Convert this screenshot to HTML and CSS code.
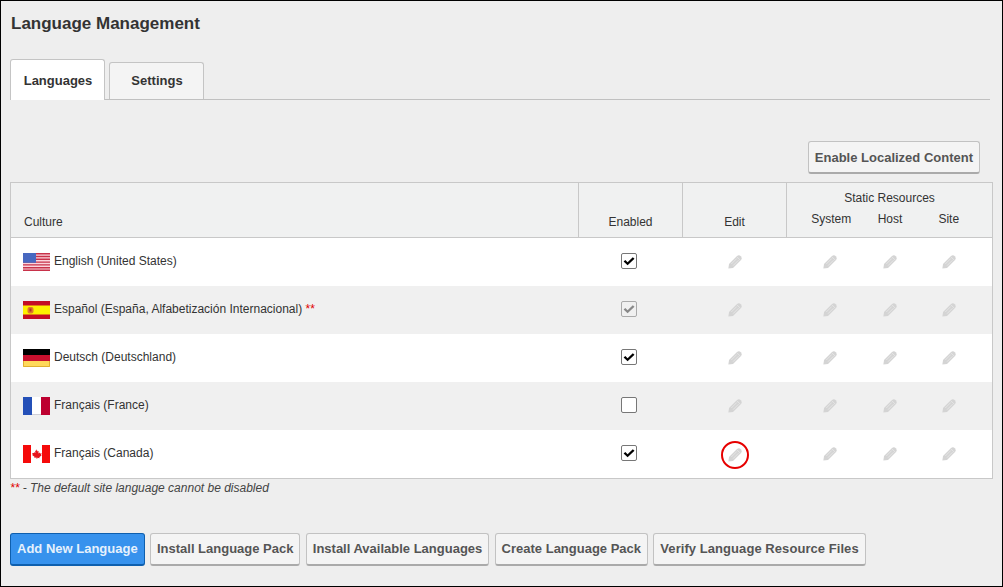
FILE: index.html
```html
<!DOCTYPE html>
<html lang="en">
<head>
    <meta charset="UTF-8">
    <title>Language Management</title>
    <link rel="stylesheet" href="styles.css">
</head>
<body>
    <svg class="defs" width="0" height="0">
        <symbol id="pencil" viewBox="0 0 14 14">
            <path d="M1 9 9 1Q11 -.4 12.8 1.2 14.4 3 13 5L5 13 .4 13.6Z"/>
            <path class="groove" d="M3.3 9 8.8 3.5M5 10.7 10.5 5.2M8.8 1.7 12.3 5.2"/>
        </symbol>
        <symbol id="tick" viewBox="0 0 14 14">
            <path d="M1.6 7.4 3.3 5.9 5.6 8.2 10.8 3.2 12.5 4.8 5.6 11.2Z"/>
        </symbol>
    </svg>

    <div class="page">
        <h1>Language Management</h1>

        <div class="tabs">
            <a class="tab active">Languages</a>
            <a class="tab">Settings</a>
        </div>

        <div class="top-actions">
            <button class="btn">Enable Localized Content</button>
        </div>

        <table class="languages">
            <colgroup>
                <col class="col-culture">
                <col class="col-enabled">
                <col class="col-edit">
                <col class="col-system">
                <col class="col-host">
                <col class="col-site">
            </colgroup>
            <thead>
                <tr>
                    <th class="culture" rowspan="2">Culture</th>
                    <th rowspan="2">Enabled</th>
                    <th rowspan="2">Edit</th>
                    <th class="static-title" colspan="3">Static Resources</th>
                </tr>
                <tr>
                    <th class="static-sub system">System</th>
                    <th class="static-sub">Host</th>
                    <th class="static-sub site">Site</th>
                </tr>
            </thead>
            <tbody>
                <tr>
                    <td class="culture">
                        <div class="lang">
                            <svg class="flag" viewBox="0 0 27 18">
                                <rect width="27" height="18" fill="#fbd5dc"/>
                                <path fill="#c8324a" d="M0 0h27v1.4H0zM0 2.8h27v1.4H0zM0 5.6h27V7H0zM0 8.4h27v1.4H0zM0 11.2h27v1.4H0zM0 14h27v1.4H0zM0 16.6h27V18H0z"/>
                                <rect width="13" height="9.8" fill="#4868c0"/>
                            </svg>
                            <span>English (United States)</span>
                        </div>
                    </td>
                    <td><span class="check on"><svg><use href="#tick"/></svg></span></td>
                    <td><svg class="pencil"><use href="#pencil"/></svg></td>
                    <td class="system"><svg class="pencil"><use href="#pencil"/></svg></td>
                    <td class="host"><svg class="pencil"><use href="#pencil"/></svg></td>
                    <td class="site"><svg class="pencil"><use href="#pencil"/></svg></td>
                </tr>
                <tr>
                    <td class="culture">
                        <div class="lang">
                            <svg class="flag" viewBox="0 0 27 18">
                                <rect width="27" height="18" fill="#c40d24"/>
                                <rect y="4.5" width="27" height="9" fill="#fdf100"/>
                                <rect x="4.5" y="6" width="6" height="6.5" rx="2" fill="#e07a2a"/>
                                <rect x="6.5" y="7.5" width="2" height="3" fill="#b0302a"/>
                            </svg>
                            <span>Español (España, Alfabetización Internacional) <b class="req">**</b></span>
                        </div>
                    </td>
                    <td><span class="check on disabled"><svg><use href="#tick"/></svg></span></td>
                    <td><svg class="pencil"><use href="#pencil"/></svg></td>
                    <td class="system"><svg class="pencil"><use href="#pencil"/></svg></td>
                    <td class="host"><svg class="pencil"><use href="#pencil"/></svg></td>
                    <td class="site"><svg class="pencil"><use href="#pencil"/></svg></td>
                </tr>
                <tr>
                    <td class="culture">
                        <div class="lang">
                            <svg class="flag" viewBox="0 0 27 18">
                                <rect width="27" height="6" fill="#000"/>
                                <rect y="6" width="27" height="6" fill="#c8102e"/>
                                <rect y="12" width="27" height="6" fill="#ffd95a"/>
                                <path fill="none" stroke="#e0b030" d="M.5 12v5.5h26V12"/>
                            </svg>
                            <span>Deutsch (Deutschland)</span>
                        </div>
                    </td>
                    <td><span class="check on"><svg><use href="#tick"/></svg></span></td>
                    <td><svg class="pencil"><use href="#pencil"/></svg></td>
                    <td class="system"><svg class="pencil"><use href="#pencil"/></svg></td>
                    <td class="host"><svg class="pencil"><use href="#pencil"/></svg></td>
                    <td class="site"><svg class="pencil"><use href="#pencil"/></svg></td>
                </tr>
                <tr>
                    <td class="culture">
                        <div class="lang">
                            <svg class="flag" viewBox="0 0 27 18">
                                <rect width="27" height="18" fill="#fff"/>
                                <rect x="9" y="17" width="9" height="1" fill="#d0d0d8"/>
                                <rect width="9" height="18" fill="#2450b8"/>
                                <rect x="18" width="9" height="18" fill="#bd0030"/>
                            </svg>
                            <span>Français (France)</span>
                        </div>
                    </td>
                    <td><span class="check"></span></td>
                    <td><svg class="pencil"><use href="#pencil"/></svg></td>
                    <td class="system"><svg class="pencil"><use href="#pencil"/></svg></td>
                    <td class="host"><svg class="pencil"><use href="#pencil"/></svg></td>
                    <td class="site"><svg class="pencil"><use href="#pencil"/></svg></td>
                </tr>
                <tr>
                    <td class="culture">
                        <div class="lang">
                            <svg class="flag" viewBox="0 0 27 18">
                                <rect width="27" height="18" fill="#fff"/>
                                <rect width="8" height="18" fill="#f50a0a"/>
                                <rect x="19" width="8" height="18" fill="#f50a0a"/>
                                <path fill="#e8141c" transform="translate(2.7 1.8) scale(.8)" d="M13.5 3.2 15 5.8l1.3-.6-.5 3.2 1.6-1.2.5 1.2 2-.3-.7 2 .8.5-3 2.4.4 1.2-2.9-.4V15h-1v-1.7l-2.9.4.4-1.2-3-2.4.8-.5-.7-2 2 .3.5-1.2 1.6 1.2-.5-3.2 1.3.6Z"/>
                            </svg>
                            <span>Français (Canada)</span>
                        </div>
                    </td>
                    <td><span class="check on"><svg><use href="#tick"/></svg></span></td>
                    <td><span class="ring"><svg class="pencil"><use href="#pencil"/></svg></span></td>
                    <td class="system"><svg class="pencil"><use href="#pencil"/></svg></td>
                    <td class="host"><svg class="pencil"><use href="#pencil"/></svg></td>
                    <td class="site"><svg class="pencil"><use href="#pencil"/></svg></td>
                </tr>
            </tbody>
        </table>

        <p class="note"><b class="req">**</b> - The default site language cannot be disabled</p>

        <div class="bottom-actions">
            <button class="btn primary">Add New Language</button>
            <button class="btn">Install Language Pack</button>
            <button class="btn">Install Available Languages</button>
            <button class="btn">Create Language Pack</button>
            <button class="btn wide">Verify Language Resource Files</button>
        </div>
    </div>
</body>
</html>
```
FILE: styles.css
```css
* {
    box-sizing: border-box;
}

html, body {
    margin: 0;
    padding: 0;
}

body {
    font-family: "Liberation Sans", Arial, sans-serif;
    font-size: 12px;
    color: #333;
    background-color: #eee;
}

.defs {
    display: block;
    height: 0;
}

.page {
    width: 1003px;
    height: 587px;
    padding: 13px 10px 0 9px;
    border: 1px solid #000;
    overflow: hidden;
}

h1 {
    margin: 0 0 0 1px;
    font-size: 17px;
    line-height: 20px;
    font-weight: bold;
    color: #333;
}

/* tabs */
.tabs {
    display: flex;
    align-items: flex-end;
    gap: 4px;
    margin-top: 26px;
    height: 40px;
    width: 980px;
    border-bottom: 1px solid #c0c0c0;
}

.tab {
    width: 95px;
    height: 37px;
    padding-left: 1px;
    border: 1px solid #c4c4c4;
    border-bottom: none;
    border-radius: 3px 3px 0 0;
    background-color: #f4f4f4;
    font-size: 13px;
    font-weight: bold;
    line-height: 36px;
    text-align: center;
}

.tab.active {
    height: 41px;
    margin-bottom: -1px;
    line-height: 42px;
    background-color: #fff;
}

/* buttons */
.btn {
    height: 33px;
    padding: 0 6px;
    border: 1px solid #c2c2c2;
    border-bottom: 2px solid #aaa;
    border-radius: 3px;
    background-color: #f4f4f4;
    color: #555;
    font-family: "Liberation Sans", Arial, sans-serif;
    font-size: 13px;
    font-weight: bold;
}

.btn.wide {
    letter-spacing: .06px;
}

.btn.primary {
    background-color: #3792ed;
    border-color: #0e5fae;
    color: #e6f1fc;
}

.top-actions {
    display: flex;
    justify-content: flex-end;
    width: 970px;
    margin-top: 41px;
}

/* table */
.languages {
    width: 982px;
    margin-top: 8px;
    border-collapse: collapse;
    table-layout: fixed;
    border: 1px solid #c8c8c8;
    background-color: #fff;
}

.col-culture {
    width: 568px;
}

.col-enabled,
.col-edit {
    width: 104px;
}

.col-system {
    width: 74px;
}

.col-host {
    width: 59px;
}

.col-site {
    width: 73px;
}

.languages th {
    font-weight: normal;
    background-color: #f0f1f1;
    border-left: 1px solid #c8c8c8;
    text-align: center;
    vertical-align: bottom;
    padding: 0 0 8px 0;
}

.languages thead {
    border-bottom: 1px solid #c8c8c8;
}

.languages th.culture {
    border-left: none;
    padding-left: 13px;
    text-align: left;
}

.languages th.static-title {
    height: 29px;
    padding: 0 0 7px 0;
}

.languages th.static-sub {
    height: 25px;
    border-left: none;
    padding-bottom: 11px;
}

.languages th.static-sub.system {
    border-left: 1px solid #c8c8c8;
}

.languages .system {
    padding-left: 15px;
}

.languages td.system {
    padding-left: 13px;
}

.languages td.host {
    padding-right: 2px;
}

.languages .site {
    padding-right: 14px;
}

.languages td {
    height: 48px;
    text-align: center;
    vertical-align: middle;
}

.languages tbody tr:first-child td {
    height: 49px;
    padding-top: 1px;
}

.languages tbody tr:nth-child(even) td {
    background-color: #f0f0f0;
}

.languages td.culture {
    padding-left: 12px;
    text-align: left;
}

.lang {
    display: flex;
    align-items: center;
    gap: 4px;
}

.lang span {
    margin-bottom: 2px;
}

.flag {
    width: 27px;
    height: 18px;
    flex: none;
}

.req {
    color: #e00000;
    font-weight: normal;
}

.check {
    display: inline-block;
    width: 16px;
    height: 16px;
    margin: 0 4px 2px 0;
    border: 1px solid #777;
    border-radius: 2px;
    background-color: #fff;
    vertical-align: middle;
}

.check svg {
    display: block;
    width: 14px;
    height: 14px;
    fill: #000;
}

.check.disabled {
    border-color: #aaa;
    background-color: #f0f0f0;
}

.check.disabled svg {
    fill: #888;
}

.pencil {
    display: inline-block;
    width: 14px;
    height: 14px;
    margin-top: 0;
    fill: #d4d4d4;
    stroke: none;
    vertical-align: middle;
}

.groove {
    fill: none;
    stroke: #ececec;
    stroke-width: .7;
}

.ring {
    display: inline-flex;
    align-items: center;
    justify-content: center;
    width: 28px;
    height: 28px;
    margin-top: 2px;
    border: 2px solid #e60000;
    border-radius: 50%;
    vertical-align: middle;
}

.note {
    margin: 2px 0 0 0;
    font-style: italic;
    line-height: 15px;
    color: #444;
}

.bottom-actions {
    display: flex;
    gap: 5.3px;
    margin-top: 37px;
}
```
